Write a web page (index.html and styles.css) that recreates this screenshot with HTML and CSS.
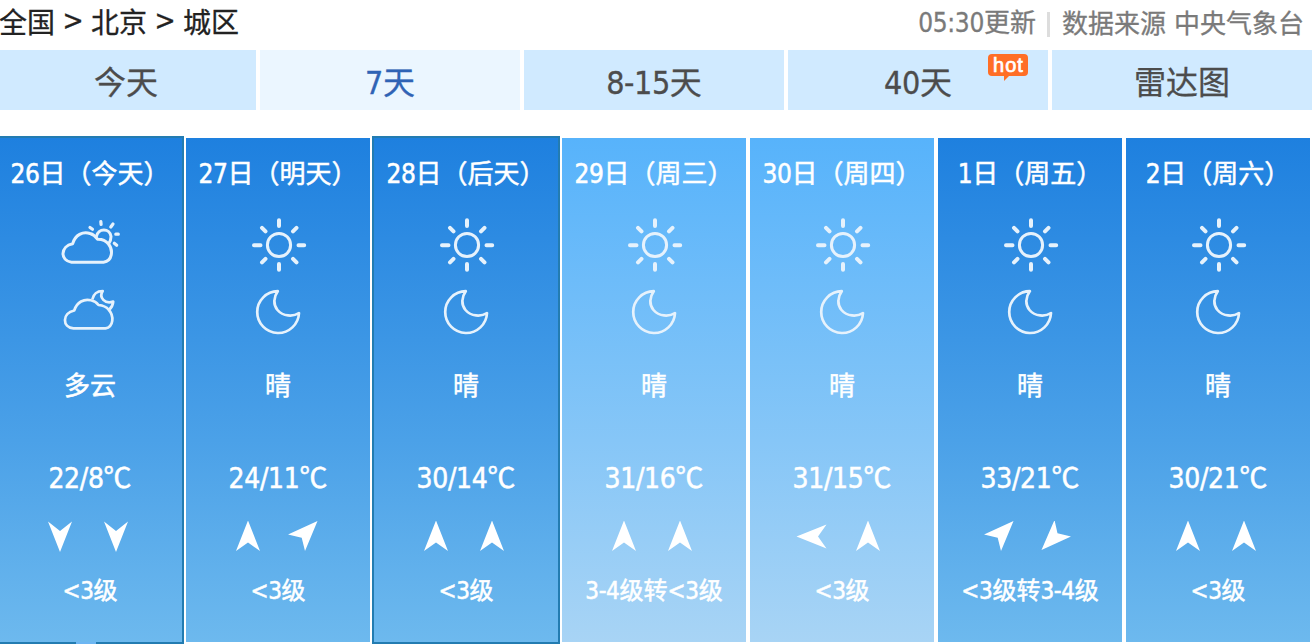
FILE: index.html
```html
<!DOCTYPE html>
<html lang="zh-CN">
<head>
  <meta charset="UTF-8">
  <title>北京城区天气预报</title>
  <link rel="stylesheet" href="styles.css">
</head>
<body>
  <!-- shared icons -->
  <svg class="sprite">
    <symbol id="sun" viewBox="0 0 60 60">
      <circle cx="31" cy="30" r="11.6"/>
      <path class="ray" d="M31 5.3v5.7M31 49v5.7M6 30.3h6.5M50.5 30.3h5.7M14 12.8l3.5 3.5M48.5 12.8l-3.5 3.5M14 47.3l3.5-3.5M48.5 47.3l-3.5-3.5"/>
    </symbol>
    <symbol id="moon" viewBox="0 0 60 60">
      <path d="M29.8 9.2A20.9 20.9 0 1 0 51 31C45 35 35 34.5 29.5 28C25 22.5 25.5 15 29.8 9.2Z"/>
    </symbol>
    <symbol id="cloud-sun" viewBox="0 0 60 60">
      <path d="M11.5 47.2C0 46 0 31 12.7 28.7C15 20 23 16 30 18.5C34 19.5 36 22 37.5 24.2C42 24 46 26 48.3 28.8C53.5 35 52.5 46 43.5 47.2Z"/>
      <path d="M36.3 21.8C38 12.5 50 13 51 21.5C51 24.5 50.2 26.5 48.8 28.5"/>
      <path class="ray-small" d="M40.8 6.5l.3 3M53 9l-2.2 3M55.8 19.2h2.5M54.3 28.2l2.4 2M30 12.5l2.5 1.8"/>
    </symbol>
    <symbol id="cloud-moon" viewBox="0 0 60 60">
      <path d="M13.5 46.4C2 45.5 2 31 14.2 28.5C17 20 24 16.5 31 18.3C34.5 19 37 21 38.5 23C43 23.5 46 24.5 48.5 27.5C54.5 34 53.5 45 45.5 46.4Z"/>
      <path d="M32.3 17.5C33.5 12 37.5 9 42.7 9C38.5 15.5 45 22.5 53.2 19.6C53 23 51.5 25.5 49.2 27.8"/>
    </symbol>
    <symbol id="wind-up" viewBox="0 0 32 32"><path d="M16 -.5L28 30L16 21.5L4 30Z"/></symbol>
    <symbol id="wind-down" viewBox="0 0 32 32"><path d="M16 31L28 .5L16 10L4 .5Z"/></symbol>
    <symbol id="wind-left" viewBox="0 0 32 32"><path d="M.5 15.5L30.5 3.5L22 15.5L30.5 27.5Z"/></symbol>
    <symbol id="wind-ne" viewBox="0 0 32 32"><path d="M29.5 0L17 30L13.7 16.7L0 13.5Z"/></symbol>
    <symbol id="wind-sw" viewBox="0 0 32 32"><path d="M1.5 29L14.5 -1L17.5 12.2L31 15.5Z"/></symbol>
  </svg>

  <div class="header">
    <div class="crumbs">
      <span>全国</span><span class="sep">&gt;</span><span>北京</span><span class="sep">&gt;</span><span>城区</span>
    </div>
    <div class="source">
      <span><span class="num">05:30</span>更新</span>
      <span class="bar"></span>
      <span>数据来源</span>
      <span class="org">中央气象台</span>
    </div>
  </div>

  <div class="tabs">
    <div class="tab">今天</div>
    <div class="tab active"><span class="num">7</span>天</div>
    <div class="tab"><span class="num">8-15</span>天</div>
    <div class="tab"><span class="num">40</span>天<span class="hot">hot</span></div>
    <div class="tab">雷达图</div>
  </div>

  <div class="days">
    <div class="day on current">
      <div class="date"><span class="num">26</span>日（今天）</div>
      <svg class="icon"><use href="#cloud-sun"/></svg>
      <svg class="icon night"><use href="#cloud-moon"/></svg>
      <div class="weather">多云</div>
      <div class="temp"><span class="num">22/8</span>℃</div>
      <div class="wind"><svg><use href="#wind-down"/></svg><svg><use href="#wind-down"/></svg></div>
      <div class="level"><span class="num">&lt;3</span>级</div>
    </div>
    <div class="day">
      <div class="date"><span class="num">27</span>日（明天）</div>
      <svg class="icon"><use href="#sun"/></svg>
      <svg class="icon night"><use href="#moon"/></svg>
      <div class="weather">晴</div>
      <div class="temp"><span class="num">24/11</span>℃</div>
      <div class="wind"><svg><use href="#wind-up"/></svg><svg><use href="#wind-ne"/></svg></div>
      <div class="level"><span class="num">&lt;3</span>级</div>
    </div>
    <div class="day on">
      <div class="date"><span class="num">28</span>日（后天）</div>
      <svg class="icon"><use href="#sun"/></svg>
      <svg class="icon night"><use href="#moon"/></svg>
      <div class="weather">晴</div>
      <div class="temp"><span class="num">30/14</span>℃</div>
      <div class="wind"><svg><use href="#wind-up"/></svg><svg><use href="#wind-up"/></svg></div>
      <div class="level"><span class="num">&lt;3</span>级</div>
    </div>
    <div class="day light">
      <div class="date"><span class="num">29</span>日（周三）</div>
      <svg class="icon"><use href="#sun"/></svg>
      <svg class="icon night"><use href="#moon"/></svg>
      <div class="weather">晴</div>
      <div class="temp"><span class="num">31/16</span>℃</div>
      <div class="wind"><svg><use href="#wind-up"/></svg><svg><use href="#wind-up"/></svg></div>
      <div class="level"><span class="num">3-4</span>级转<span class="num">&lt;3</span>级</div>
    </div>
    <div class="day light">
      <div class="date"><span class="num">30</span>日（周四）</div>
      <svg class="icon"><use href="#sun"/></svg>
      <svg class="icon night"><use href="#moon"/></svg>
      <div class="weather">晴</div>
      <div class="temp"><span class="num">31/15</span>℃</div>
      <div class="wind"><svg><use href="#wind-left"/></svg><svg><use href="#wind-up"/></svg></div>
      <div class="level"><span class="num">&lt;3</span>级</div>
    </div>
    <div class="day">
      <div class="date"><span class="num">1</span>日（周五）</div>
      <svg class="icon"><use href="#sun"/></svg>
      <svg class="icon night"><use href="#moon"/></svg>
      <div class="weather">晴</div>
      <div class="temp"><span class="num">33/21</span>℃</div>
      <div class="wind"><svg><use href="#wind-ne"/></svg><svg><use href="#wind-sw"/></svg></div>
      <div class="level"><span class="num">&lt;3</span>级转<span class="num">3-4</span>级</div>
    </div>
    <div class="day">
      <div class="date"><span class="num">2</span>日（周六）</div>
      <svg class="icon"><use href="#sun"/></svg>
      <svg class="icon night"><use href="#moon"/></svg>
      <div class="weather">晴</div>
      <div class="temp"><span class="num">30/21</span>℃</div>
      <div class="wind"><svg><use href="#wind-up"/></svg><svg><use href="#wind-up"/></svg></div>
      <div class="level"><span class="num">&lt;3</span>级</div>
    </div>
  </div>
</body>
</html>
```
FILE: styles.css
```css
* { box-sizing: border-box; }
body { width: 1312px; height: 644px; margin: 0; overflow: hidden; background: #fff; font-family: "Noto Sans CJK SC", sans-serif; -webkit-text-stroke: 0.3px; }
.sprite { display: none; }
.num { font-family: "DejaVu Sans Condensed", "DejaVu Sans", sans-serif; font-stretch: condensed; letter-spacing: -0.013em; }

.header { display: flex; justify-content: space-between; height: 50px; padding-right: 8px; line-height: 42px; }
.crumbs { display: flex; margin-left: -1px; font-size: 28px; color: #222; }
.sep { width: 36px; text-align: center; font-family: "DejaVu Sans Condensed", "DejaVu Sans", sans-serif; font-stretch: condensed; }
.source { display: flex; align-items: center; height: 44px; font-size: 26px; color: #7a7a7a; }
.bar { width: 3px; height: 25px; margin: 5px 12px 0 11px; background: #ddd; }
.org { margin-left: 8px; }

.tabs { display: flex; gap: 4px; margin-left: -4px; }
.tab { position: relative; width: 260px; height: 60px; line-height: 60px; text-align: center; font-size: 32px; color: #4c4c4c; background: #d0eaff; }
.tab.active { color: #2f63b5; background: #ebf6ff; }
.hot { position: absolute; top: 4px; right: 20px; width: 40px; height: 22px; border-radius: 4px; background: #ff6e26; color: #fff; font: 20px/23px "Liberation Sans", sans-serif; letter-spacing: 1px; text-indent: 1px; -webkit-text-stroke: 0.7px; }
.hot::after { content: ""; position: absolute; left: 16px; top: 21px; border-top: 6px solid #ff6e26; border-right: 6px solid transparent; }

.days { display: flex; margin: 26px 0 0 -4px; }
.day { position: relative; width: 188px; height: 508px; flex: none; border: 2px solid #fff; text-align: center; color: #fff; background: linear-gradient(#1e80df, #4ba1e8 60%, #6db9ee); background-clip: padding-box; -webkit-text-stroke: 0.5px; }
.day.on { background-clip: border-box; border-color: #237cb1; }
.day.light { background-image: linear-gradient(#57b3fb, #86c6f7 60%, #a8d4f5); }
.current::after { content: ""; position: absolute; left: 78px; bottom: -2px; width: 20px; height: 2px; background: #6db6f3; }

.date { height: 68px; line-height: 67px; font-size: 26px; }
.icon { display: block; width: 60px; height: 60px; margin: 9px auto 0; fill: none; stroke: #e6f2fc; stroke-width: 3; stroke-linejoin: round; }
.icon.night { margin-top: 7px; stroke-width: 2.7; }
.ray { stroke-width: 4; stroke-linecap: round; }
.ray-small { stroke-width: 3.2; stroke-linecap: round; }
.weather { height: 86px; line-height: 83px; font-size: 26px; }
.temp { height: 86px; margin-top: 7px; line-height: 83px; font-size: 28px; }
.wind { display: flex; justify-content: center; gap: 24px; padding-right: 4px; }
.wind svg { width: 32px; height: 32px; fill: #fff; overflow: visible; }
.wind symbol { overflow: visible; }
.level { height: 74px; line-height: 71px; font-size: 24px; }
```
